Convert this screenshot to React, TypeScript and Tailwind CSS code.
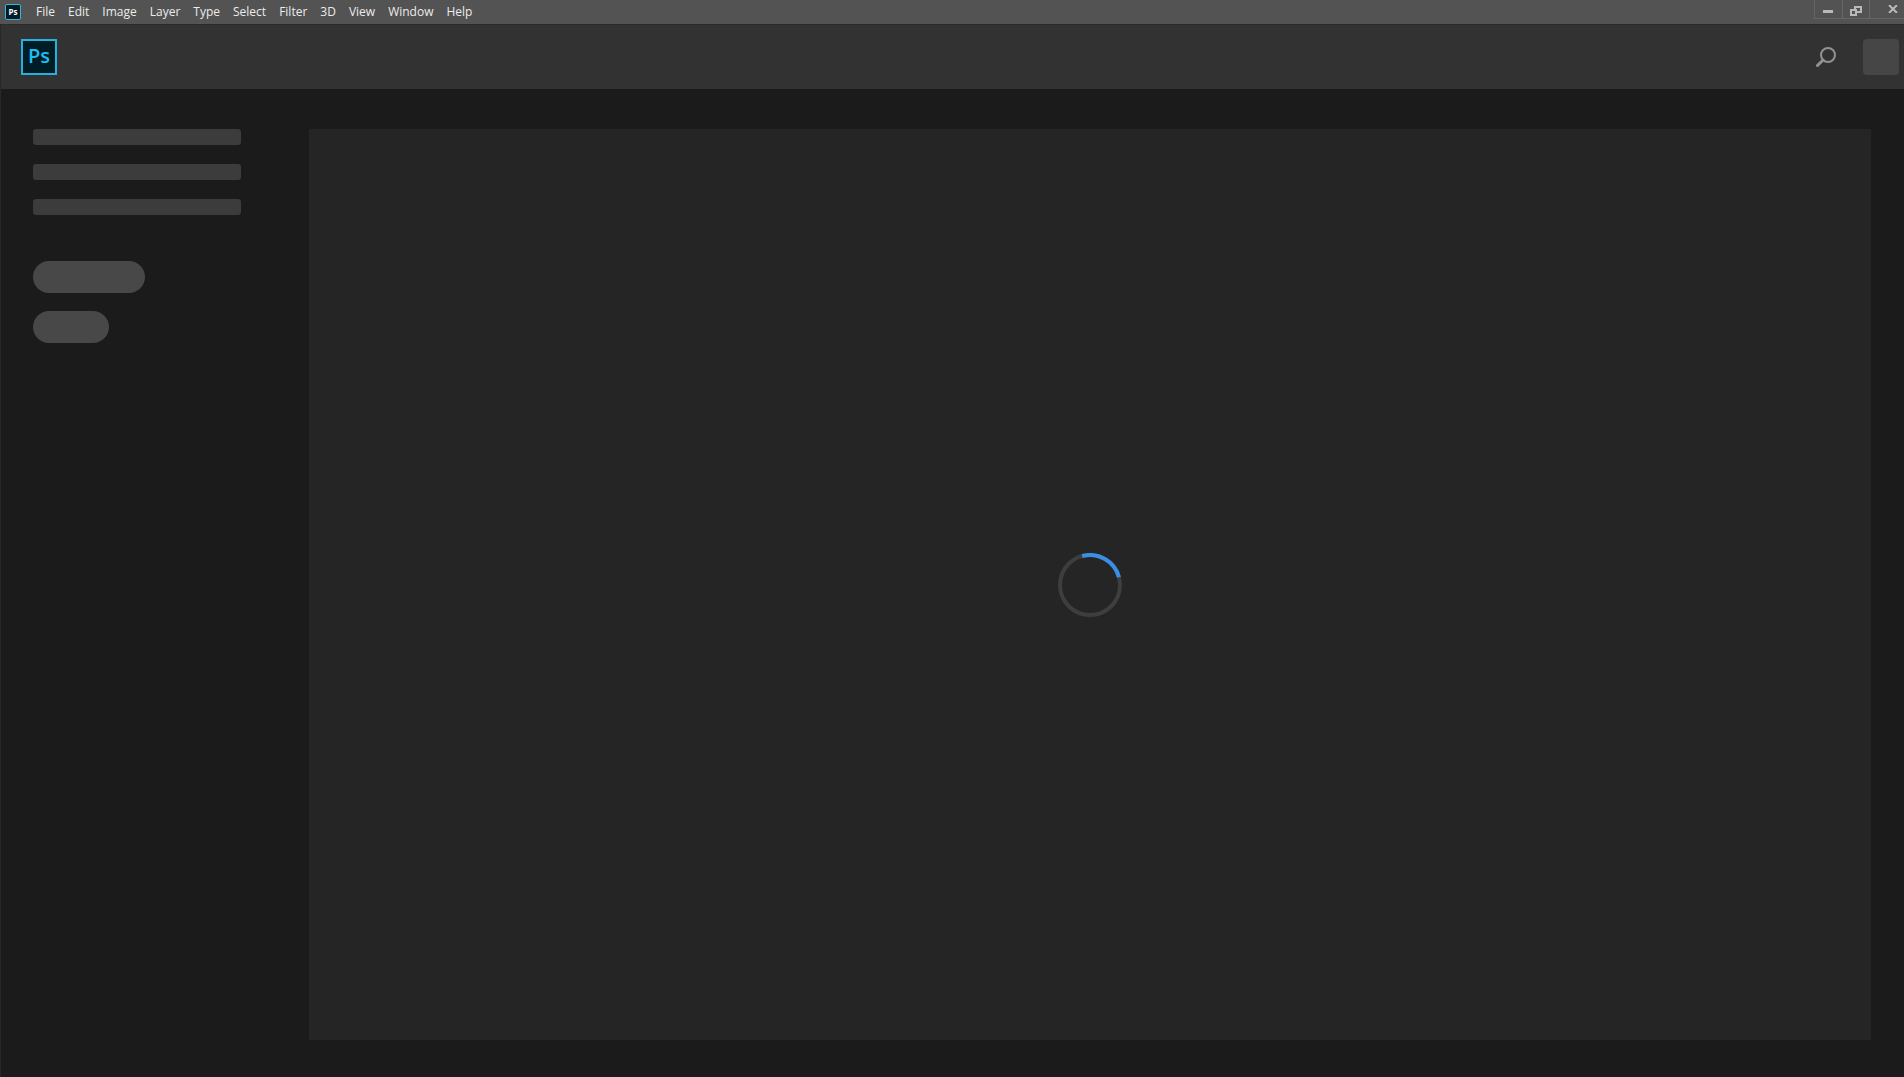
import { clsx } from "clsx"

const menuItems = [
  "File",
  "Edit",
  "Image",
  "Layer",
  "Type",
  "Select",
  "Filter",
  "3D",
  "View",
  "Window",
  "Help",
]

const navPlaceholders = ["home", "learn", "files"]

function MenuBar() {
  return (
    <div className="flex h-6 justify-between bg-[#535353]">
      <div className="flex items-center">
        <span className="ml-[5px] flex size-4 items-center justify-center rounded-xs border border-[#39b4dc] bg-[#001d26] text-[8px] leading-none font-bold text-white">
          Ps
        </span>
        <nav className="ml-2 flex">
          {menuItems.map((item) => (
            <button
              key={item}
              type="button"
              className="pr-1.5 pl-[7px] text-[12px] leading-5 text-[#ececec]"
            >
              {item}
            </button>
          ))}
        </nav>
      </div>

      {/* Window controls */}
      <div className="flex h-[19px] border-b border-l border-[#666666] text-[#b9b9b9]">
        <button
          type="button"
          aria-label="Minimize"
          className="flex w-7 items-center justify-center border-r border-[#666666]"
        >
          <svg width="12" height="12" fill="currentColor" className="mt-1">
            <path d="M0 5h10v3H0z" />
          </svg>
        </button>
        <button
          type="button"
          aria-label="Restore"
          className="flex w-[27px] items-center justify-center border-r border-[#666666]"
        >
          <svg
            width="12"
            height="10"
            fill="none"
            stroke="currentColor"
            strokeWidth="2"
            className="mt-1"
          >
            <path d="M1 4h5v5H1zM5 3V1h6v5H7" />
          </svg>
        </button>
        <button
          type="button"
          aria-label="Close"
          className="flex w-[34px] items-center justify-center pl-3"
        >
          <svg
            width="10"
            height="8"
            stroke="currentColor"
            strokeWidth="2"
          >
            <path d="M1 0l8 8M9 0L1 8" />
          </svg>
        </button>
      </div>
    </div>
  )
}

function Header() {
  return (
    <header className="flex h-[65px] items-center justify-between border-t border-[#2b2b2b] bg-[#323232] pr-[5px] pl-5">
      <div className="flex size-9 items-center justify-center border-2 border-[#26b0dc] bg-[#001d26] pb-0.5 text-[20px] leading-none font-semibold text-[#1cc0f5]">
        Ps
      </div>
      <div className="flex items-center gap-[27px]">
        <button type="button" aria-label="Search">
          <svg
            width="20"
            height="20"
            fill="none"
            stroke="#929292"
            strokeWidth="2"
            strokeLinecap="round"
          >
            <circle cx="12" cy="8" r="7" />
            <path d="M7 13l-5.500 5.500" strokeWidth="3" />
          </svg>
        </button>
        <div className="size-9 rounded-sm bg-[#464646]" />
      </div>
    </header>
  )
}

function Sidebar() {
  return (
    <aside className="w-[276px] shrink-0">
      <div className="flex flex-col gap-[19px]">
        {navPlaceholders.map((name) => (
          <div key={name} className="h-4 w-52 rounded-[3px] bg-[#3c3c3c]" />
        ))}
      </div>
      <div className="mt-[46px] flex flex-col gap-[18px]">
        {["w-28", "w-[76px]"].map((width) => (
          <div
            key={width}
            className={clsx("h-8 rounded-full bg-[#484848]", width)}
          />
        ))}
      </div>
    </aside>
  )
}

function Spinner() {
  return (
    <svg
      width="64"
      height="64"
      viewBox="0 0 64 64"
      fill="none"
      strokeWidth="4"
      role="status"
      aria-label="Loading"
    >
      <circle cx="32" cy="32" r="30" stroke="#3e3e3e" />
      <path d="M24.240 3.020A30 30 0 0 1 60.980 24.240" stroke="#3a8ee6" />
    </svg>
  )
}

export default function App() {
  return (
    <div className="flex min-h-screen flex-col bg-[#1b1b1b] font-['Open_Sans',sans-serif]">
      <MenuBar />
      <div className="flex grow flex-col border-l border-[#282828]">
        <Header />
        <main className="flex grow pt-10 pr-[33px] pb-[37px] pl-8">
          <Sidebar />
          <section className="flex grow items-center justify-center bg-[#252525]">
            <Spinner />
          </section>
        </main>
      </div>
    </div>
  )
}
